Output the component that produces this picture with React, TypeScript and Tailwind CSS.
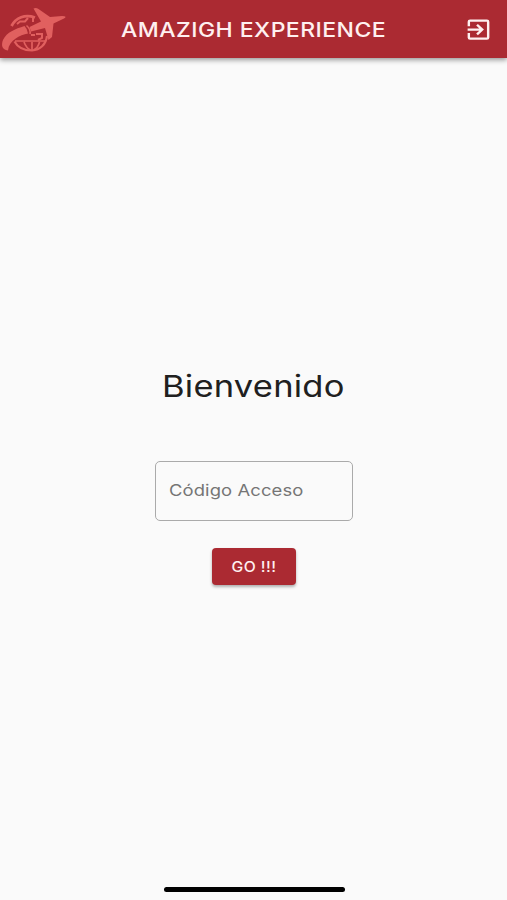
function Logo() {
  return (
    <svg className="block h-[58px] w-[70px]" viewBox="0 0 70 58" fill="none" aria-label="Amazigh Experience">
      <g stroke="#e1605f">
        <path d="M11.5 26C16 17.500 25 14 35 17.500" strokeWidth="2.800" />
        <path d="M14.500 41.500C18 48 25 50.500 32 50.500C40 50 46 44.500 47 36" strokeWidth="2.200" />
        <path d="M15 41H45.500M24 42C25.500 46 28 49 30.500 50M39.500 42C38.500 46 36 49 33.500 50M32 42V50" strokeWidth="1.700" />
        <path d="M17 24L20 21.500H25L28 18M33 18V22M31 35H35M36 34H42V38L38 40" strokeWidth="2" />
      </g>
      <path d="M26.500 25.500C29.500 28 30.500 31 30 34" stroke="#e1605f" strokeWidth="1.600" />
      <path d="M8 50.500C2 50 1 45 3 40C7 32 15 29 24.500 26Q27.500 29 28 33.500C20 35 9 40 8 50.500Z" fill="#e1605f" />
      <path d="M33.500 8.500Q36 7.500 38.500 9L50 17L62 16Q68 16 64 18.500L53.500 23.500L52 37L48.500 40L45 28L31 31.500L29.500 27L41 21.500Z" fill="#e1605f" />
    </svg>
  );
}

function ExitIcon() {
  return (
    <svg className="block h-[27px] w-[29px]" viewBox="0 0 24 24" preserveAspectRatio="none" fill="#fff0f0">
      <path d="M10.09 15.59 11.5 17l5-5-5-5-1.41 1.41L12.67 11H3v2h9.67l-2.58 2.59zM19 3H5a2 2 0 0 0-2 2v4h2V5h14v14H5v-4H3v4a2 2 0 0 0 2 2h14a2 2 0 0 0 2-2V5a2 2 0 0 0-2-2z" />
    </svg>
  );
}

export default function App() {
  return (
    <div className="flex h-[900px] w-full flex-col overflow-hidden bg-[#fafafa] font-['Inter',sans-serif]">
      <header className="flex h-[58px] shrink-0 items-center bg-[#ab2a32] shadow-[0_2px_5px_rgba(0,0,0,0.4)]">
        <Logo />
        <h1 className="ml-[51px] w-[264px] whitespace-nowrap pt-px text-[20px] font-medium leading-[30px] tracking-[0.4px] text-[#fff0f0]">
          <span className="inline-block origin-left scale-x-[1.15]">AMAZIGH EXPERIENCE</span>
        </h1>
        <button aria-label="Salir" className="ml-auto mr-[14px] pt-px"><ExitIcon /></button>
      </header>
      <main className="flex grow flex-col items-center pt-[306px]">
        <h2 className="h-[44px] w-[183px] whitespace-nowrap text-[30px] leading-[44px] tracking-[0.2px] text-[#202020]">
          <span className="inline-block origin-left scale-x-[1.15]">Bienvenido</span>
        </h2>
        <div className="ml-px mt-[53px] flex h-[60px] w-[198px] items-center rounded-[5px] border border-[#aaa] pb-[2px] pl-[13px] text-[16px] leading-[24px] tracking-[0.1px] text-[#757575]">
          <span className="inline-block origin-left scale-x-[1.15] whitespace-nowrap">Código Acceso</span>
        </div>
        <button className="ml-px mt-[27px] flex h-[37px] w-[84px] items-center justify-center rounded-[4px] bg-[#ab2a32] text-[14px] font-medium leading-[20px] tracking-[0.4px] text-[#fff0f0] shadow-[0_2px_3px_rgba(0,0,0,0.3)]">
          <span className="inline-block scale-x-[1.12] whitespace-nowrap">GO !!!</span>
        </button>
      </main>
      <div className="mb-[8px] ml-px h-[5px] w-[181px] shrink-0 self-center rounded-full bg-black" />
    </div>
  );
}
